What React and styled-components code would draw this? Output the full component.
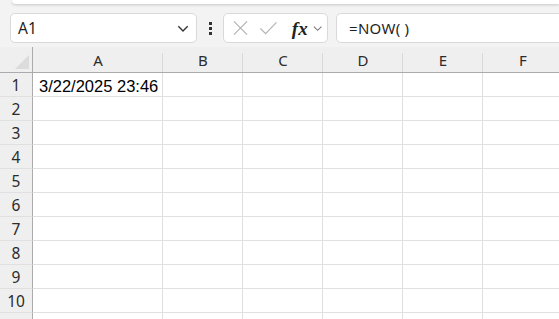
import React from 'react';
import styled, { createGlobalStyle } from 'styled-components';

const Global = createGlobalStyle`
  html, body { margin: 0; padding: 0; }
  body { background: #f3f3f3; overflow: hidden; }
`;

const Page = styled.div`
  width: 559px;
  height: 319px;
  overflow: hidden;
  background: #f3f3f3;
  font-family: 'Segoe UI', 'Noto Sans', 'Open Sans', sans-serif;
`;

const TopCard = styled.div`
  margin-left: 12px;
  height: 4px;
  background: #fff;
  border-bottom-left-radius: 8px;
  box-shadow: 0 1px 3px rgba(0,0,0,0.18);
`;

const Toolbar = styled.div`
  display: flex;
  align-items: center;
  padding: 9px 0 0 10px;
  height: 30px;
`;

const Box = styled.div`
  box-sizing: border-box;
  height: 30px;
  background: #fff;
  border: 1px solid #d9d9d9;
  border-radius: 5px;
  display: flex;
  align-items: center;
`;

const NameBox = styled(Box)`
  width: 187px;
  padding: 0 6px 0 7px;
  justify-content: space-between;
  font-size: 15.5px;
  color: #1f1f1f;
`;

const Dots = styled.div`
  width: 26px;
  display: flex;
  flex-direction: column;
  align-items: center;
  gap: 2px;
  span {
    width: 3px;
    height: 3px;
    background: #333;
  }
`;

const FuncBox = styled(Box)`
  width: 105px;
  padding: 0 4px 0 8px;
  gap: 10px;
`;

const Fx = styled.span`
  font-family: 'Liberation Serif', 'DejaVu Serif', serif;
  font-style: italic;
  font-weight: bold;
  font-size: 19px;
  color: #222;
  margin-left: 4px;
  margin-right: -6px;
  line-height: 1;
`;

const Formula = styled(Box)`
  margin-left: 8px;
  flex: 1;
  margin-right: -10px;
  padding-left: 12px;
  font-size: 15px;
  color: #1f1f1f;
  letter-spacing: 0.3px;
`;

const Paren = styled.span`
  margin-right: ${p => p.$gap || 0}px;
`;

const Grid = styled.div`
  margin-top: 4px;
  display: grid;
  grid-template-columns: 33px 130px repeat(5, 80px);
  grid-template-rows: 26px repeat(11, 24px);
`;

const Corner = styled.div`
  background: #efefef;
  border-right: 1px solid #ababab;
  border-bottom: 1px solid #ababab;
  position: relative;
  &::after {
    content: '';
    position: absolute;
    right: 3px;
    bottom: 3px;
    border-style: solid;
    border-width: 0 0 14px 14px;
    border-color: transparent transparent #dcdcdc transparent;
  }
`;

const ColHead = styled.div`
  background: #efefef;
  border-bottom: 1px solid #ababab;
  display: flex;
  align-items: center;
  justify-content: center;
  font-size: 15px;
  color: #2b2b2b;
  position: relative;
  &::after {
    content: '';
    position: absolute;
    right: 0;
    top: 6px;
    bottom: 0;
    width: 1px;
    background: #d8d8d8;
  }
`;

const RowHead = styled.div`
  background: #efefef;
  border-right: 1px solid #ababab;
  border-bottom: 1px solid #e0e0e0;
  display: flex;
  align-items: center;
  justify-content: center;
  font-size: 15.5px;
  color: #2b2b2b;
`;

const Cell = styled.div`
  background: #fff;
  border-right: 1px solid #e0e0e0;
  border-bottom: 1px solid #e0e0e0;
  padding: 4px 0 0 6px;
  display: flex;
  align-items: center;
  font-family: 'Liberation Sans', Arial, sans-serif;
  font-size: 16.5px;
  color: #000;
  white-space: nowrap;
`;

const Chevron = ({ size = 12 }) => (
  <svg width={size} height={size} viewBox="0 0 12 12" fill="none">
    <path d="M2 4.5 L6 8.5 L10 4.5" stroke="#333" strokeWidth="1.2" />
  </svg>
);

const cols = ['A', 'B', 'C', 'D', 'E', 'F'];
const rows = Array.from({ length: 11 }, (_, i) => i + 1);

export default function App() {
  return (
    <Page>
      <Global />
      <TopCard />
      <Toolbar>
        <NameBox>
          A1
          <Chevron size={14} />
        </NameBox>
        <Dots><span /><span /><span /></Dots>
        <FuncBox>
          <svg width="18" height="18" viewBox="0 0 18 18">
            <path d="M2 2 L16 16 M16 2 L2 16" stroke="#b4b4b4" strokeWidth="1.3" />
          </svg>
          <svg width="20" height="18" viewBox="0 0 20 18">
            <path d="M1.5 9.5 L7 15 L18.5 3" stroke="#b4b4b4" strokeWidth="1.3" fill="none" />
          </svg>
          <Fx>fx</Fx>
          <svg width="12" height="12" viewBox="0 0 12 12" fill="none">
            <path d="M2 4.5 L6 8.5 L10 4.5" stroke="#777" strokeWidth="1.1" />
          </svg>
        </FuncBox>
        <Formula>=NOW<Paren $gap={4}>(</Paren>)</Formula>
      </Toolbar>
      <Grid>
        <Corner />
        {cols.map(c => <ColHead key={c}>{c}</ColHead>)}
        {rows.map(r => (
          <React.Fragment key={r}>
            <RowHead>{r <= 10 ? r : ''}</RowHead>
            {cols.map(c => (
              <Cell key={c}>{r === 1 && c === 'A' ? '3/22/2025 23:46' : ''}</Cell>
            ))}
          </React.Fragment>
        ))}
      </Grid>
    </Page>
  );
}
